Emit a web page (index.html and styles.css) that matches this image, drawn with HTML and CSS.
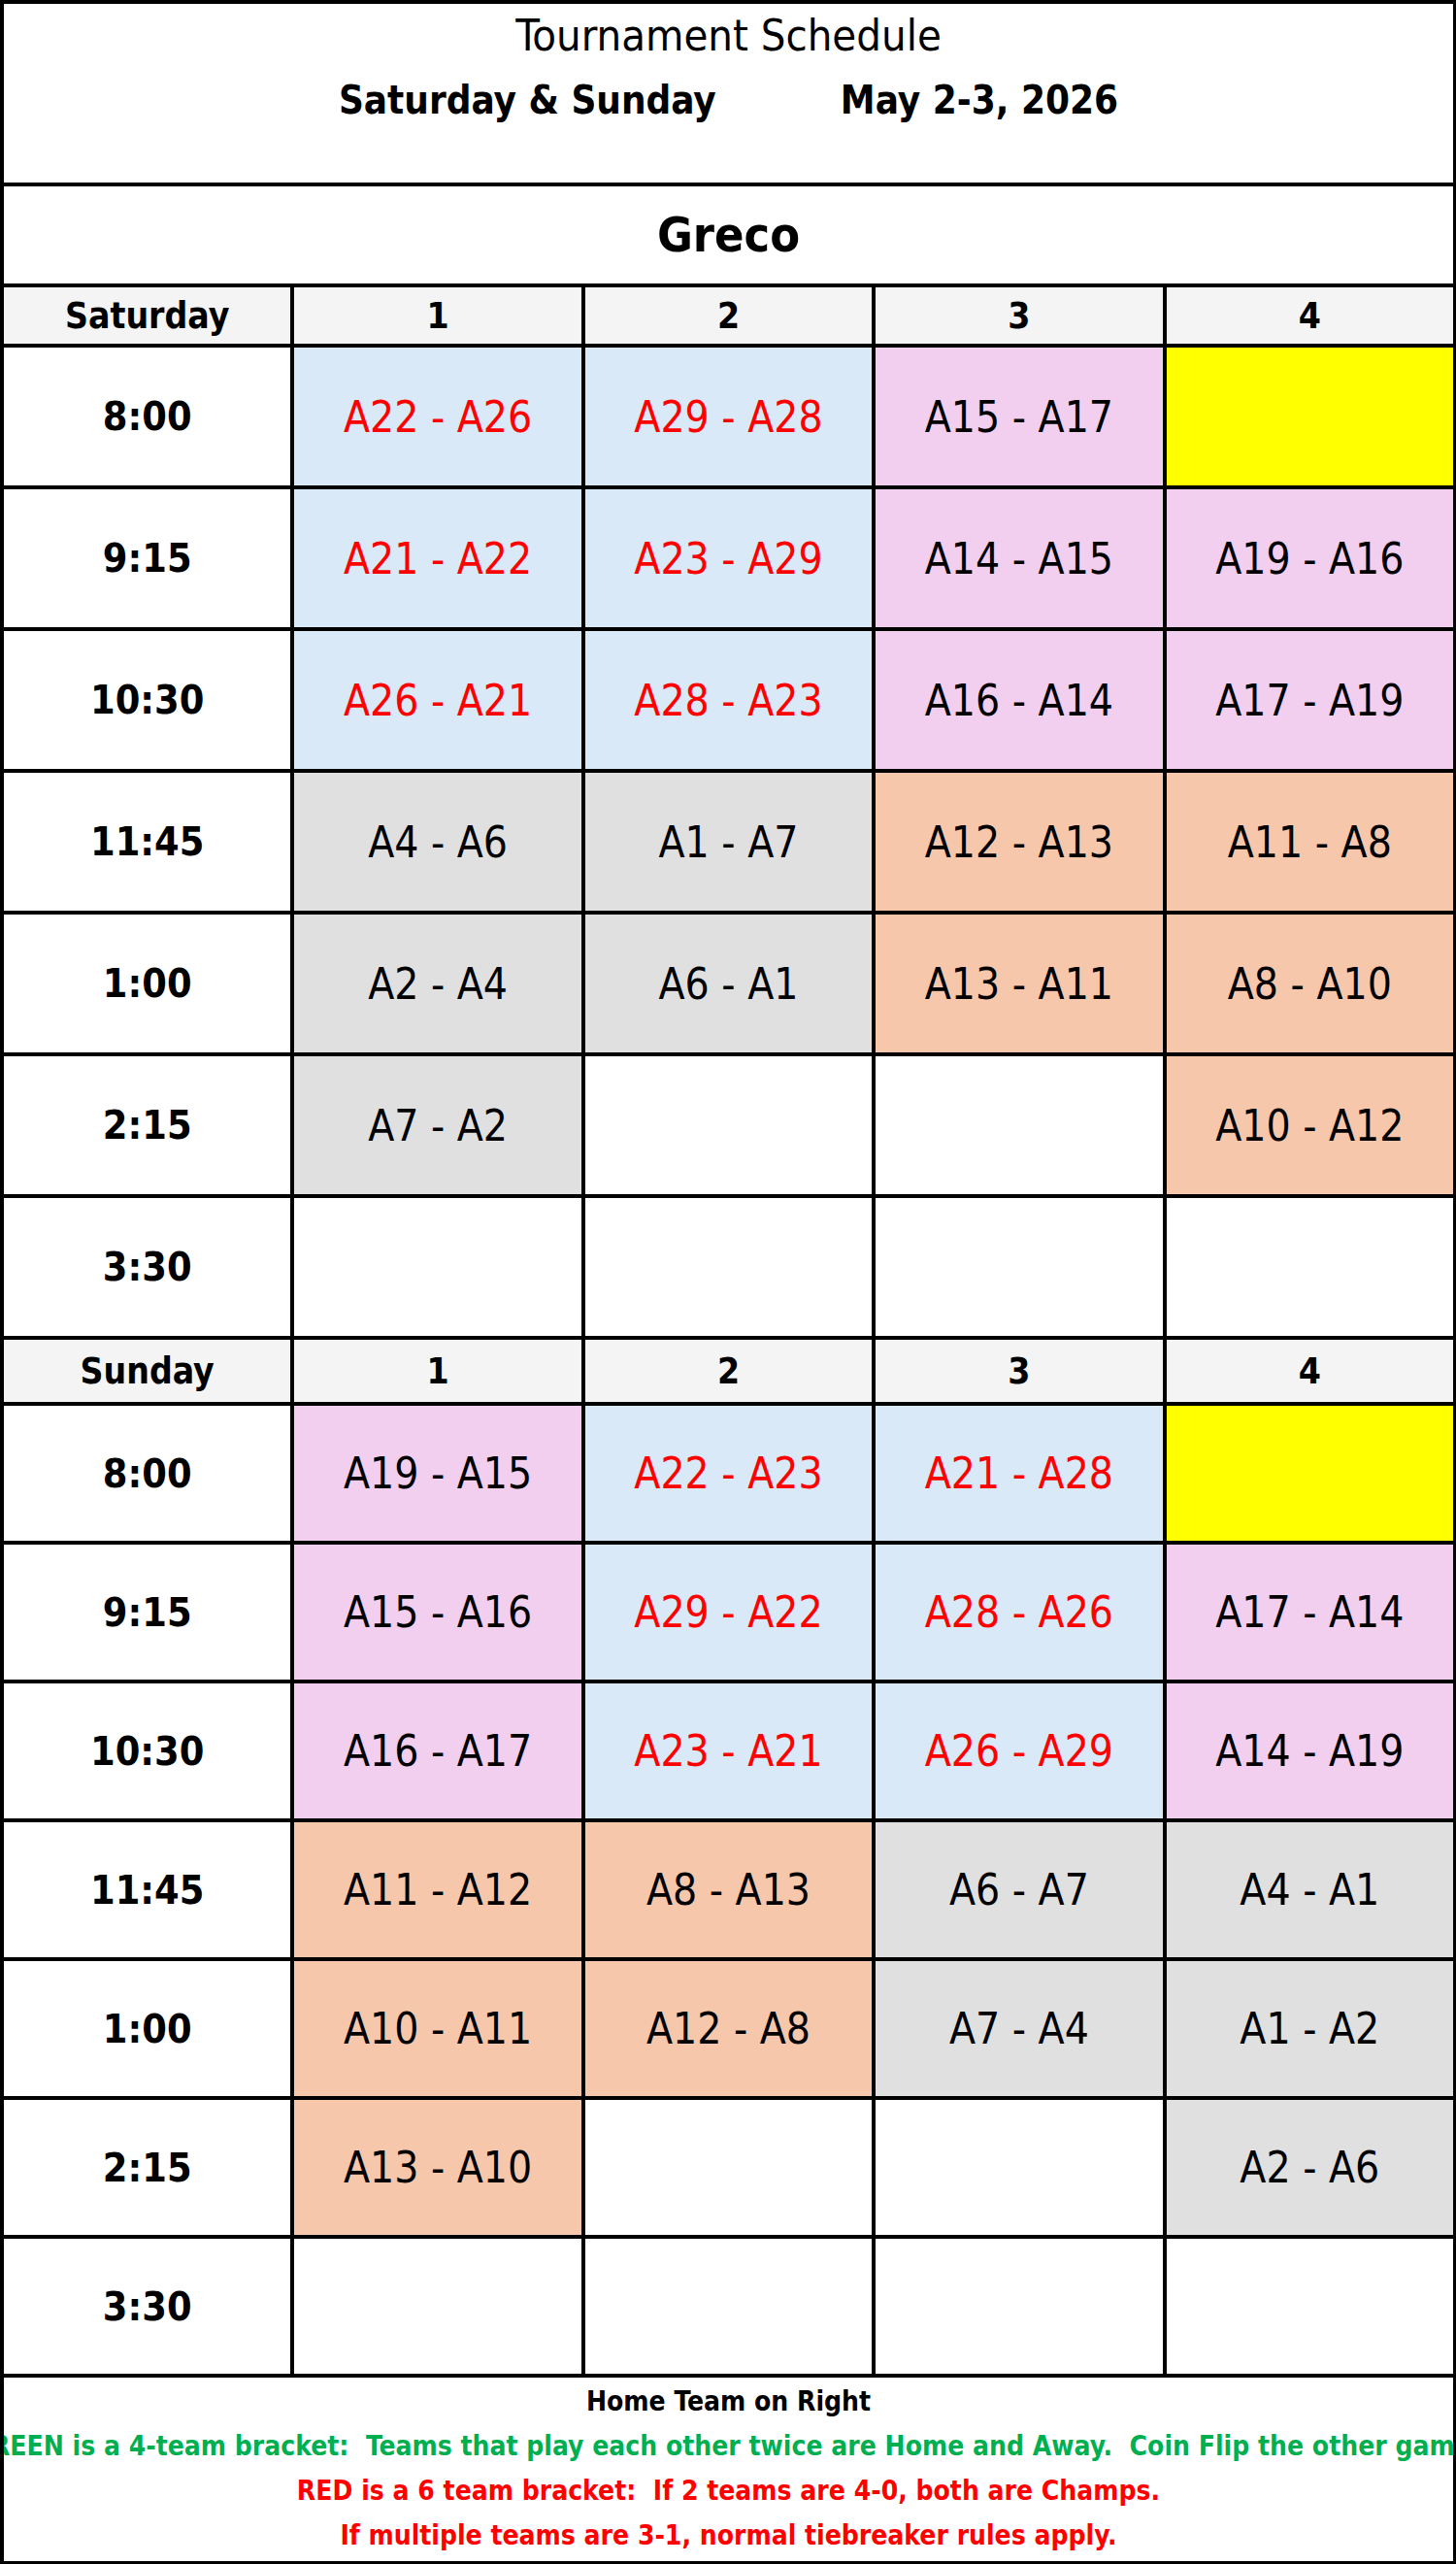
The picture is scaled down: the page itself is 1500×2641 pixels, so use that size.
FILE: index.html
```html
<!DOCTYPE html>
<html lang="en">
<head>
<meta charset="utf-8">
<title>Tournament Schedule</title>
<link rel="stylesheet" href="styles.css">
</head>
<body>
<div class="sheet">
  <div class="cell span5 title-block">
    <div class="title">Tournament Schedule</div>
    <div class="dates"><span>Saturday &amp; Sunday</span><span>May 2-3, 2026</span></div>
  </div>
  <div class="cell span5 site">Greco</div>

  <div class="cell hdr">Saturday</div>
  <div class="cell hdr">1</div>
  <div class="cell hdr">2</div>
  <div class="cell hdr">3</div>
  <div class="cell hdr">4</div>

  <div class="cell time">8:00</div>
  <div class="cell game blue red">A22 - A26</div>
  <div class="cell game blue red">A29 - A28</div>
  <div class="cell game pink">A15 - A17</div>
  <div class="cell game yellow"></div>

  <div class="cell time">9:15</div>
  <div class="cell game blue red">A21 - A22</div>
  <div class="cell game blue red">A23 - A29</div>
  <div class="cell game pink">A14 - A15</div>
  <div class="cell game pink">A19 - A16</div>

  <div class="cell time">10:30</div>
  <div class="cell game blue red">A26 - A21</div>
  <div class="cell game blue red">A28 - A23</div>
  <div class="cell game pink">A16 - A14</div>
  <div class="cell game pink">A17 - A19</div>

  <div class="cell time">11:45</div>
  <div class="cell game gray">A4 - A6</div>
  <div class="cell game gray">A1 - A7</div>
  <div class="cell game orange">A12 - A13</div>
  <div class="cell game orange">A11 - A8</div>

  <div class="cell time">1:00</div>
  <div class="cell game gray">A2 - A4</div>
  <div class="cell game gray">A6 - A1</div>
  <div class="cell game orange">A13 - A11</div>
  <div class="cell game orange">A8 - A10</div>

  <div class="cell time">2:15</div>
  <div class="cell game gray">A7 - A2</div>
  <div class="cell game"></div>
  <div class="cell game"></div>
  <div class="cell game orange">A10 - A12</div>

  <div class="cell time">3:30</div>
  <div class="cell game"></div>
  <div class="cell game"></div>
  <div class="cell game"></div>
  <div class="cell game"></div>

  <div class="cell hdr">Sunday</div>
  <div class="cell hdr">1</div>
  <div class="cell hdr">2</div>
  <div class="cell hdr">3</div>
  <div class="cell hdr">4</div>

  <div class="cell time">8:00</div>
  <div class="cell game pink">A19 - A15</div>
  <div class="cell game blue red">A22 - A23</div>
  <div class="cell game blue red">A21 - A28</div>
  <div class="cell game yellow"></div>

  <div class="cell time">9:15</div>
  <div class="cell game pink">A15 - A16</div>
  <div class="cell game blue red">A29 - A22</div>
  <div class="cell game blue red">A28 - A26</div>
  <div class="cell game pink">A17 - A14</div>

  <div class="cell time">10:30</div>
  <div class="cell game pink">A16 - A17</div>
  <div class="cell game blue red">A23 - A21</div>
  <div class="cell game blue red">A26 - A29</div>
  <div class="cell game pink">A14 - A19</div>

  <div class="cell time">11:45</div>
  <div class="cell game orange">A11 - A12</div>
  <div class="cell game orange">A8 - A13</div>
  <div class="cell game gray">A6 - A7</div>
  <div class="cell game gray">A4 - A1</div>

  <div class="cell time">1:00</div>
  <div class="cell game orange">A10 - A11</div>
  <div class="cell game orange">A12 - A8</div>
  <div class="cell game gray">A7 - A4</div>
  <div class="cell game gray">A1 - A2</div>

  <div class="cell time">2:15</div>
  <div class="cell game orange">A13 - A10</div>
  <div class="cell game"></div>
  <div class="cell game"></div>
  <div class="cell game gray">A2 - A6</div>

  <div class="cell time">3:30</div>
  <div class="cell game"></div>
  <div class="cell game"></div>
  <div class="cell game"></div>
  <div class="cell game"></div>

  <div class="cell span5 notes">
    <div class="note">Home Team on Right</div>
    <div class="note green">GREEN is a 4-team bracket:&nbsp; Teams that play each other twice are Home and Away.&nbsp; Coin Flip the other games</div>
    <div class="note redtxt">RED is a 6 team bracket:&nbsp; If 2 teams are 4-0, both are Champs.</div>
    <div class="note redtxt">If multiple teams are 3-1, normal tiebreaker rules apply.</div>
  </div>
</div>
</body>
</html>
```

FILE: styles.css
```css
html, body {
  margin: 0;
  padding: 0;
  background: #ffffff;
}

body {
  font-family: "Liberation Sans Narrow", "DejaVu Sans Condensed", "Liberation Sans", sans-serif;
  font-stretch: condensed;
  color: #000000;
}

.sheet {
  width: 1500px;
  height: 2641px;
  box-sizing: border-box;
  background: #000000;
  padding: 4px 3px 3px 4px;
  display: grid;
  grid-template-columns: repeat(5, 1fr);
  grid-template-rows:
    184px 100px 58px
    142px 142px 142px 142px 142px 142px 142px
    64px
    139px 139px 139px 139px 139px 139px 139px
    1fr;
  gap: 4px;
}

.cell {
  background: #ffffff;
  display: flex;
  align-items: center;
  justify-content: center;
  overflow: hidden;
  white-space: nowrap;
}

.span5 {
  grid-column: 1 / span 5;
}

.title-block {
  flex-direction: column;
  justify-content: flex-start;
}

.title {
  font-size: 45px;
  line-height: 66px;
  font-weight: 400;
}

.dates {
  display: flex;
  gap: 128px;
  font-size: 40px;
  line-height: 67px;
  font-weight: 700;
}

.site {
  font-size: 50px;
  font-weight: 700;
}

.hdr {
  background: #f4f4f4;
  font-size: 37px;
  font-weight: 700;
}

.time {
  font-size: 41px;
  font-weight: 700;
}

.game {
  font-size: 44px;
  font-weight: 400;
}

.blue { background: #dae9f8; }
.pink { background: #f2ceef; }
.gray { background: #e0e0e0; }
.orange { background: #f7c7ac; }
.yellow { background: #ffff00; }
.red { color: #ff0000; }

.notes {
  flex-direction: column;
  justify-content: flex-start;
  padding-top: 2px;
}

.note {
  font-size: 28px;
  line-height: 46px;
  font-weight: 700;
}

.green { color: #00b050; }
.redtxt { color: #ff0000; }
```
